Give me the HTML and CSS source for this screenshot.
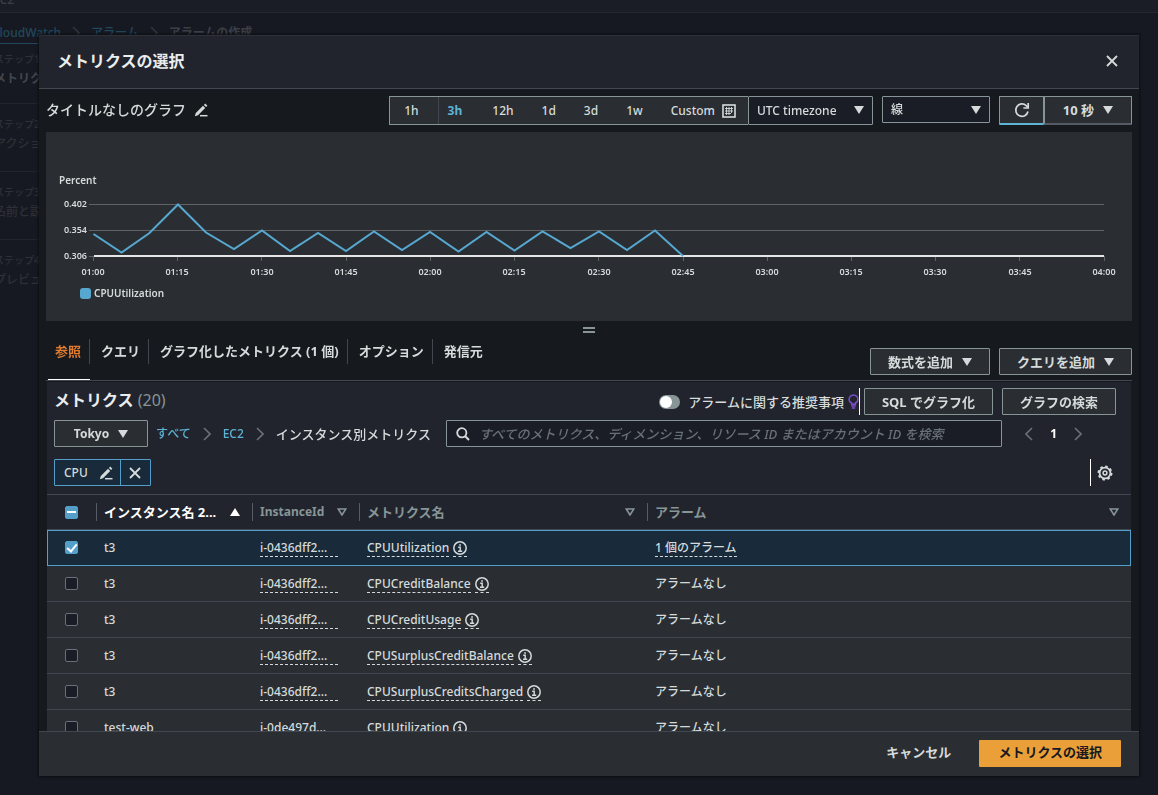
FILE: index.html
```html
<!DOCTYPE html>
<html lang="ja">

<head>
    <meta charset="UTF-8">
    <meta name="viewport" content="width=device-width, initial-scale=1.0">
    <title>メトリクスの選択 | CloudWatch</title>
    <link rel="stylesheet" href="styles.css">
</head>

<body>
<!-- 共通アイコン -->
<svg class="sprite" aria-hidden="true">
    <symbol id="caret" viewBox="0 0 10 8"><path d="M0 0h10L5 8z" fill="currentColor"/></symbol>
    <symbol id="sort" viewBox="0 0 10 8"><path d="M1.2 1h7.6L5 7z" fill="none" stroke="currentColor" stroke-width="1.6"/></symbol>
    <symbol id="chevron" viewBox="0 0 8 14"><path d="M1 1l6 6-6 6" fill="none" stroke="currentColor" stroke-width="1.6"/></symbol>
    <symbol id="cross" viewBox="0 0 14 14"><path d="M2 2l10 10M12 2L2 12" fill="none" stroke="currentColor" stroke-width="1.8"/></symbol>
    <symbol id="pencil" viewBox="0 0 14 14"><path d="M.8 13.200l1-3.200L9 2.800l2.200 2.200L4 12.200zM9.900 1.900l1.300-1.300 2.200 2.200-1.300 1.300z" fill="currentColor"/><path d="M6 12.700h7.500" stroke="currentColor" stroke-width="1.500"/></symbol>
    <symbol id="info" viewBox="0 0 14 14"><circle cx="7" cy="7" r="6.2" fill="none" stroke="currentColor" stroke-width="1.5"/><path d="M5.2 6.2h2v4M5 10.3h4.2" fill="none" stroke="currentColor" stroke-width="1.4"/><path d="M6.2 3.2h1.7v1.6H6.2z" fill="currentColor"/></symbol>
</svg>

<div class="page">
    <div class="page-top">EC2</div>
    <nav class="page-crumbs">
        <a href="#">CloudWatch</a>
        <svg class="chevron"><use href="#chevron"/></svg>
        <a class="plain" href="#">アラーム</a>
        <svg class="chevron"><use href="#chevron"/></svg>
        <strong>アラームの作成</strong>
    </nav>
    <ol class="steps">
        <li class="current"><small>ステップ1</small>メトリクス</li>
        <li><small>ステップ2</small>アクション</li>
        <li><small>ステップ3</small>名前と説明</li>
        <li><small>ステップ4</small>プレビュー</li>
    </ol>
</div>

<div class="overlay">
    <div class="modal" role="dialog" aria-labelledby="modal-title">
        <header class="modal-header">
            <h2 id="modal-title">メトリクスの選択</h2>
            <button class="icon-btn" aria-label="閉じる"><svg class="ico"><use href="#cross"/></svg></button>
        </header>

        <div class="modal-body">
            <div class="graph-bar">
                <h3>タイトルなしのグラフ</h3>
                <button class="icon-btn" aria-label="タイトルを編集"><svg class="ico"><use href="#pencil"/></svg></button>
                <div class="range">
                    <button class="first">1h</button>
                    <button class="active">3h</button>
                    <button>12h</button>
                    <button>1d</button>
                    <button>3d</button>
                    <button>1w</button>
                    <button class="custom">Custom
                        <svg class="ico" viewBox="0 0 14 14"><rect x="1" y="1" width="12" height="12" fill="none" stroke="currentColor" stroke-width="1.6"/><path d="M3 4.5h8M3 7h8M3 9.5h6M4.5 3v8M7 3v8M9.5 3v6" stroke="currentColor" stroke-width=".9"/></svg>
                    </button>
                </div>
                <div class="select timezone">
                    <select aria-label="タイムゾーン"><option>UTC timezone</option></select>
                    <svg class="caret"><use href="#caret"/></svg>
                </div>
                <div class="select kind">
                    <select aria-label="グラフの種類"><option>線</option></select>
                    <svg class="caret"><use href="#caret"/></svg>
                </div>
                <div class="refresh">
                    <button class="btn reload" aria-label="更新">
                        <svg class="ico" viewBox="0 0 16 16"><path d="M14 9.5A6.2 6.2 0 1 1 12.2 3.6L14 5.4" fill="none" stroke="currentColor" stroke-width="1.7"/><path d="M14.2 1v5H9.4" fill="none" stroke="currentColor" stroke-width="1.7"/></svg>
                    </button>
                    <button class="btn interval">10 秒 <svg class="caret"><use href="#caret"/></svg></button>
                </div>
            </div>

            <div class="chart">
                <svg viewBox="0 0 1086 189" role="img" aria-label="CPUUtilization">
                    <text class="unit" x="13" y="52">Percent</text>
                    <g class="y-labels">
                        <text x="41" y="75">0.402</text>
                        <text x="41" y="101">0.354</text>
                        <text x="41" y="127">0.306</text>
                    </g>
                    <path class="grid" d="M43 72.5H1058M43 98.5H1058M43 124.5H48"/>
                    <path class="grid" d="M47.5 124v5M131.5 124v5M215.5 124v5M300.5 124v5M384.5 124v5M468.5 124v5M552.5 124v5M637.5 124v5M721.5 124v5M805.5 124v5M889.5 124v5M973.5 124v5M1058.5 124v5"/>
                    <path class="axis" d="M48 124H1058"/>
                    <polyline class="line" points="47.5,102 75.5,120.5 103.5,101 132,72.5 160,100.5 188,117 216,98.5 244,119 272,101 300,119 328,99.5 356,118 384,100 412.5,119.5 440.5,100 468.5,118.5 496.5,99.5 524.5,116 553,99.5 581,118 609,98.5 637,124"/>
                    <g class="x-labels">
                        <text x="47" y="143">01:00</text>
                        <text x="131" y="143">01:15</text>
                        <text x="216" y="143">01:30</text>
                        <text x="300" y="143">01:45</text>
                        <text x="384" y="143">02:00</text>
                        <text x="468" y="143">02:15</text>
                        <text x="553" y="143">02:30</text>
                        <text x="637" y="143">02:45</text>
                        <text x="721" y="143">03:00</text>
                        <text x="805" y="143">03:15</text>
                        <text x="889" y="143">03:30</text>
                        <text x="974" y="143">03:45</text>
                        <text x="1058" y="143">04:00</text>
                    </g>
                    <rect class="swatch" x="34" y="156" width="11" height="11" rx="3"/>
                    <text class="unit" x="48" y="165">CPUUtilization</text>
                </svg>
            </div>
            <div class="resizer"><span></span></div>

            <div class="tab-bar">
                <div class="tabs" role="tablist">
                    <button role="tab" class="active" aria-selected="true"><span>参照</span></button>
                    <button role="tab"><span>クエリ</span></button>
                    <button role="tab"><span>グラフ化したメトリクス (1 個)</span></button>
                    <button role="tab"><span>オプション</span></button>
                    <button role="tab"><span>発信元</span></button>
                </div>
                <div class="tab-actions">
                    <button class="btn">数式を追加 <svg class="caret"><use href="#caret"/></svg></button>
                    <button class="btn">クエリを追加 <svg class="caret"><use href="#caret"/></svg></button>
                </div>
            </div>

            <section class="metrics">
                <div class="metrics-head">
                    <h3>メトリクス <span>(20)</span></h3>
                    <input class="toggle" type="checkbox" role="switch" id="recommend">
                    <label for="recommend">アラームに関する推奨事項</label>
                    <svg class="bulb" viewBox="0 0 12 16"><path d="M4 11V9.6C2.2 8.8 1.2 7.4 1.2 5.7a4.8 4.8 0 0 1 9.6 0c0 1.7-1 3.1-2.8 3.9V11zM3.5 13h5M4.2 15.2h3.6" fill="none" stroke="currentColor" stroke-width="1.6"/></svg>
                    <i class="bar"></i>
                    <button class="btn sql">SQL でグラフ化</button>
                    <button class="btn find">グラフの検索</button>
                </div>

                <div class="metrics-filter">
                    <button class="btn region">Tokyo <svg class="caret"><use href="#caret"/></svg></button>
                    <nav class="crumbs">
                        <a href="#">すべて</a>
                        <svg class="chevron"><use href="#chevron"/></svg>
                        <a href="#">EC2</a>
                        <svg class="chevron"><use href="#chevron"/></svg>
                        <span>インスタンス別メトリクス</span>
                    </nav>
                    <div class="search">
                        <svg class="ico" viewBox="0 0 14 14"><circle cx="5.8" cy="5.8" r="4.6" fill="none" stroke="currentColor" stroke-width="1.8"/><path d="M9.2 9.2L13 13" stroke="currentColor" stroke-width="2"/></svg>
                        <input type="search" aria-label="検索" placeholder="すべてのメトリクス、ディメンション、リソース ID またはアカウント ID を検索">
                    </div>
                    <div class="pager">
                        <button class="icon-btn" aria-label="前へ"><svg class="chevron flip"><use href="#chevron"/></svg></button>
                        <b>1</b>
                        <button class="icon-btn" aria-label="次へ"><svg class="chevron"><use href="#chevron"/></svg></button>
                    </div>
                </div>

                <div class="metrics-tokens">
                    <div class="token">
                        <button>CPU <svg class="ico"><use href="#pencil"/></svg></button>
                        <button aria-label="削除"><svg class="ico"><use href="#cross"/></svg></button>
                    </div>
                    <i class="bar"></i>
                    <button class="icon-btn" aria-label="設定">
                        <svg class="gear" viewBox="0 0 16 16"><circle cx="8" cy="8" r="5.4" fill="none" stroke="currentColor" stroke-width="1.8"/><circle cx="8" cy="8" r="6.6" fill="none" stroke="currentColor" stroke-width="1.8" stroke-dasharray="2.592 2.592"/><circle cx="8" cy="8" r="1.9" fill="none" stroke="currentColor" stroke-width="1.5"/></svg>
                    </button>
                </div>

                <table>
                    <colgroup>
                        <col class="c-check"><col class="c-name"><col class="c-id"><col class="c-metric"><col>
                    </colgroup>
                    <thead>
                    <tr>
                        <th><input class="check partial" type="checkbox" aria-label="すべて選択"></th>
                        <th class="ja sorted"><div>インスタンス名 2... <svg class="caret up"><use href="#caret"/></svg></div></th>
                        <th><div>InstanceId <svg class="caret"><use href="#sort"/></svg></div></th>
                        <th class="ja"><div>メトリクス名 <svg class="caret"><use href="#sort"/></svg></div></th>
                        <th class="ja"><div>アラーム <svg class="caret"><use href="#sort"/></svg></div></th>
                    </tr>
                    </thead>
                    <tbody>
                    <tr class="selected">
                        <td><input class="check" type="checkbox" aria-label="t3 CPUUtilization" checked></td>
                        <td>t3</td>
                        <td><span class="dash id">i-0436dff2...</span></td>
                        <td><span class="dash">CPUUtilization</span> <span class="dash"><svg class="ico"><use href="#info"/></svg></span></td>
                        <td><span class="dash">1 個のアラーム</span></td>
                    </tr>
                    <tr>
                        <td><input class="check" type="checkbox" aria-label="t3 CPUCreditBalance"></td>
                        <td>t3</td>
                        <td><span class="dash id">i-0436dff2...</span></td>
                        <td><span class="dash">CPUCreditBalance</span> <span class="dash"><svg class="ico"><use href="#info"/></svg></span></td>
                        <td>アラームなし</td>
                    </tr>
                    <tr>
                        <td><input class="check" type="checkbox" aria-label="t3 CPUCreditUsage"></td>
                        <td>t3</td>
                        <td><span class="dash id">i-0436dff2...</span></td>
                        <td><span class="dash">CPUCreditUsage</span> <span class="dash"><svg class="ico"><use href="#info"/></svg></span></td>
                        <td>アラームなし</td>
                    </tr>
                    <tr>
                        <td><input class="check" type="checkbox" aria-label="t3 CPUSurplusCreditBalance"></td>
                        <td>t3</td>
                        <td><span class="dash id">i-0436dff2...</span></td>
                        <td><span class="dash">CPUSurplusCreditBalance</span> <span class="dash"><svg class="ico"><use href="#info"/></svg></span></td>
                        <td>アラームなし</td>
                    </tr>
                    <tr>
                        <td><input class="check" type="checkbox" aria-label="t3 CPUSurplusCreditsCharged"></td>
                        <td>t3</td>
                        <td><span class="dash id">i-0436dff2...</span></td>
                        <td><span class="dash">CPUSurplusCreditsCharged</span> <span class="dash"><svg class="ico"><use href="#info"/></svg></span></td>
                        <td>アラームなし</td>
                    </tr>
                    <tr>
                        <td><input class="check" type="checkbox" aria-label="test-web CPUUtilization"></td>
                        <td>test-web</td>
                        <td><span class="dash id">i-0de497d...</span></td>
                        <td><span class="dash">CPUUtilization</span> <span class="dash"><svg class="ico"><use href="#info"/></svg></span></td>
                        <td>アラームなし</td>
                    </tr>
                    </tbody>
                </table>
            </section>
        </div>

        <footer class="modal-footer">
            <button class="link-btn">キャンセル</button>
            <button class="primary">メトリクスの選択</button>
        </footer>
    </div>
</div>
</body>

</html>
```

FILE: styles.css
```css
* {
    margin: 0;
    padding: 0;
    box-sizing: border-box;
}

body {
    height: 100vh;
    overflow: hidden;
    background: #161922;
    color: #d5dbdb;
    font: 500 12px/20px "Noto Sans", "Noto Sans CJK JP", sans-serif;
}

button,
input,
select {
    font: inherit;
    color: inherit;
}

button {
    background: none;
    border: 0;
    white-space: nowrap;
    cursor: pointer;
}

a {
    color: #5cb3d4;
    text-decoration: none;
}

ol {
    list-style: none;
}

/* アイコン */
.sprite {
    display: none;
}

.ico {
    width: 14px;
    height: 14px;
    flex: none;
}

.caret {
    width: 10px;
    height: 8px;
    flex: none;
}

.chevron {
    width: 8px;
    height: 14px;
    flex: none;
    color: #687078;
}

.up,
.flip {
    transform: rotate(180deg);
}

.icon-btn {
    display: flex;
    align-items: center;
}

.bar {
    width: 1px;
    height: 27px;
    background: #fff;
}

/* 背面のページ */
.page {
    margin-left: -8px;
    color: #3b3f45;
}

.page-top {
    height: 13px;
    padding-left: 1px;
    line-height: 0;
    background: #1a1d26;
    border-bottom: 1px solid #23272f;
}

.page-crumbs {
    display: flex;
    align-items: center;
    gap: 11px;
    height: 40px;
}

.page-crumbs a {
    color: #21485a;
    border-bottom: 1px solid #21485a;
}

.page-crumbs .plain {
    border: 0;
}

.page-crumbs .chevron {
    color: #30343a;
}

.steps {
    margin-top: -4px;
}

.steps li {
    width: 220px;
    height: 68px;
    padding-left: 2px;
    color: #2d3137;
    border-bottom: 1px solid #20242b;
}

.steps li + li {
    padding-top: 10px;
}

.steps li:last-child {
    border: 0;
}

.steps .current {
    height: 55px;
    color: #43474d;
    font-weight: 700;
}

.steps small {
    display: block;
    color: #2d3137;
    font-size: 10px;
    font-weight: 500;
}

/* モーダル */
.overlay {
    position: fixed;
    inset: 0;
    display: flex;
    padding: 35px 19px 19px 39px;
}

.modal {
    display: flex;
    flex-direction: column;
    flex: 1;
    min-width: 0;
    background: #16191d;
    box-shadow: 0 0 2px 1px #0c0e11;
}

.modal-header {
    display: flex;
    align-items: center;
    justify-content: space-between;
    height: 54px;
    padding: 0 20px 2px 18px;
    flex: none;
    background: #21242c;
    border-top: 1px solid #2e3238;
    border-bottom: 1px solid #414750;
}

.modal-header h2 {
    color: #eaeded;
    font-size: 16px;
    font-weight: 700;
}

.modal-body {
    display: flex;
    flex-direction: column;
    flex: 1;
    min-height: 0;
    padding: 0 7px;
    overflow: hidden;
}

.modal-body > * {
    flex: none;
}

.modal-footer {
    display: flex;
    align-items: center;
    justify-content: flex-end;
    gap: 28px;
    height: 45px;
    padding: 0 18px 2px;
    flex: none;
    background: #2a2e33;
    border-top: 1px solid #414750;
    font-size: 13px;
    font-weight: 700;
}

.modal-footer button {
    height: 27px;
    padding-bottom: 3px;
}

.modal-footer .primary {
    padding: 0 19px 3px;
    background: #eb9f38;
    border-radius: 1px;
    color: #16191f;
}

/* ボタンとセレクト */
.btn {
    display: flex;
    align-items: center;
    justify-content: center;
    gap: 9px;
    height: 27px;
    padding: 0 17px;
    background: #2a2e33;
    border: 1px solid #879596;
    border-radius: 1px;
    font-size: 13px;
    font-weight: 700;
}

.select {
    position: relative;
}

.select select {
    width: 100%;
    height: 100%;
    padding: 0 8px;
    appearance: none;
    background: #1a1d26;
    border: 1px solid #879596;
    border-radius: 1px;
}

.select .caret {
    position: absolute;
    top: 10px;
    right: 9px;
    pointer-events: none;
}

/* グラフ上部 */
.graph-bar {
    display: flex;
    align-items: flex-start;
    height: 43px;
    padding-top: 7px;
}

.graph-bar h3 {
    margin-right: 8px;
    font-size: 14px;
    font-weight: 500;
    line-height: 28px;
}

.graph-bar > .icon-btn {
    height: 28px;
    margin-right: auto;
}

.range {
    display: flex;
    height: 29px;
    background: #2a2e33;
    border: 1px solid #879596;
    border-right: 0;
}

.range button {
    display: flex;
    align-items: center;
    gap: 7px;
    padding: 0 14px;
}

.range .first {
    padding-right: 19px;
}

.range .active {
    padding: 0 16px 0 9px;
    border-left: 1px solid #414750;
    color: #5cb3d4;
    font-weight: 700;
}

.range .custom {
    padding-right: 12px;
}

.timezone {
    width: 125px;
    height: 29px;
}

.kind {
    width: 108px;
    height: 27px;
    margin: 0 9px;
}

.refresh {
    display: flex;
}

.refresh .btn {
    height: 29px;
    border-bottom: 2px solid #545b64;
}

.refresh .reload {
    width: 45px;
    padding: 0;
    border-bottom-color: #5cb3d4;
}

.refresh .reload .ico {
    width: 16px;
    height: 16px;
}

.refresh .interval {
    width: 88px;
}

/* グラフ */
.chart {
    background: #2a2e33;
}

.chart svg {
    display: block;
    width: 100%;
    height: auto;
}

.chart text {
    fill: #d5dbdb;
    font-size: 9px;
    font-weight: 600;
}

.chart .unit {
    font-size: 10px;
}

.y-labels {
    text-anchor: end;
}

.x-labels {
    text-anchor: middle;
}

.grid {
    fill: none;
    stroke: #606264;
}

.axis {
    stroke: #e6e6e6;
    stroke-width: 2;
}

.line {
    fill: none;
    stroke: #57a8d0;
    stroke-width: 2;
}

.swatch {
    fill: #57a8d0;
}

.resizer {
    display: flex;
    align-items: center;
    justify-content: center;
    height: 17px;
}

.resizer span {
    width: 12px;
    height: 6px;
    border: solid #879596;
    border-width: 2px 0;
}

/* タブ */
.tab-bar {
    display: flex;
    justify-content: space-between;
    height: 43px;
    border-bottom: 1px solid #414750;
}

.tabs {
    display: flex;
    padding-left: 2px;
}

.tabs button {
    height: 42px;
    padding-bottom: 15px;
    font-size: 13px;
    font-weight: 700;
}

.tabs span {
    display: block;
    padding: 2px 8px 3px 11px;
    border-right: 1px solid #414750;
}

.tabs .active {
    border-bottom: 1px solid #fff;
    padding-bottom: 14px;
    color: #e07b30;
}

.tabs .active span {
    padding-left: 7px;
}

.tabs button:last-child span {
    border: 0;
}

.tab-actions {
    display: flex;
    gap: 9px;
    padding-top: 10px;
}

/* メトリクス一覧 */
.metrics {
    margin: 1px 1px 0;
    background: #21242c;
}

.metrics-head,
.metrics-filter,
.metrics-tokens {
    display: flex;
    align-items: center;
    padding: 6px 15px 0 7px;
}

.metrics-head h3 {
    align-self: flex-start;
    margin-right: auto;
    color: #eaeded;
    font-size: 16px;
    font-weight: 700;
    line-height: 24px;
}

.metrics-head h3 span {
    color: #879596;
    font-weight: 400;
}

.metrics-head label {
    margin: 0 4px 0 8px;
    font-size: 13px;
}

.toggle {
    width: 21px;
    height: 14px;
    padding: 1px;
    appearance: none;
    background: #879596;
    border-radius: 7px;
}

.toggle::after {
    content: "";
    display: block;
    width: 12px;
    height: 12px;
    border-radius: 50%;
    background: #fff;
}

.bulb {
    width: 11px;
    height: 15px;
    color: #7d4fd0;
}

.sql {
    margin: 0 9px 0 4px;
}

.metrics-filter {
    padding-top: 5px;
}

.region {
    width: 94px;
    font-size: 12px;
}

.crumbs {
    display: flex;
    align-items: center;
    gap: 12px;
    margin: 0 15px 0 8px;
    font-size: 13px;
    white-space: nowrap;
}

.crumbs a {
    font-size: 12px;
}

.search {
    display: flex;
    align-items: center;
    flex: 1;
    gap: 9px;
    height: 27px;
    padding: 0 9px;
    background: #1a1d26;
    border: 1px solid #879596;
    border-radius: 1px;
}

.search input {
    flex: 1;
    min-width: 0;
    background: none;
    border: 0;
    outline: 0;
    font-size: 13px;
}

.search input::placeholder {
    color: #687078;
    font-style: italic;
}

.pager {
    display: flex;
    align-items: center;
    gap: 17px;
    margin: 0 34px 0 23px;
    color: #fff;
}

.pager .icon-btn {
    width: 8px;
}

.metrics-tokens {
    gap: 6px;
    padding: 12px 18px 8px 7px;
}

.token {
    display: flex;
    height: 27px;
    margin-right: auto;
    background: #192a3a;
    border: 1px solid #539fc9;
    border-radius: 1px;
}

.token button {
    display: flex;
    align-items: center;
    gap: 11px;
    padding: 0 7px 0 9px;
}

.token button + button {
    padding: 0 8px 0 7px;
    border-left: 1px solid #539fc9;
}

.gear {
    width: 16px;
    height: 16px;
}

/* テーブル */
table {
    width: 100%;
    table-layout: fixed;
    border-collapse: separate;
    border-spacing: 0;
    border-top: 1px solid #414750;
}

.c-check {
    width: 49px;
}

.c-name {
    width: 156px;
}

.c-id {
    width: 107px;
}

.c-metric {
    width: 288px;
}

th {
    height: 35px;
    padding: 0;
    border-bottom: 1px solid #414750;
    color: #879596;
    font-weight: 700;
    text-align: left;
}

th div {
    display: flex;
    align-items: center;
    justify-content: space-between;
    height: 18px;
    padding: 0 12px 0 7px;
    border-left: 1px solid #545b64;
    white-space: nowrap;
}

.ja {
    font-size: 13px;
}

.sorted {
    color: #fff;
}

td {
    height: 36px;
    padding: 0 8px;
    background: #2a2e33;
    border-bottom: 1px solid #414750;
    white-space: nowrap;
}

th:first-child,
td:first-child {
    padding-left: 18px;
}

.selected {
    outline: 1px solid #539fc9;
    outline-offset: -1px;
}

.selected td {
    background: #192a3a;
    border-color: #539fc9;
}

.dash {
    display: inline-block;
    height: 18px;
    border-bottom: 1px dashed #d5dbdb;
    line-height: 18px;
    vertical-align: middle;
}

.dash + .dash {
    margin-left: 1px;
}

.dash .ico {
    display: block;
    margin-top: 2px;
}

.id {
    width: 78px;
}

.check {
    display: block;
    width: 13px;
    height: 13px;
    appearance: none;
    background: #1a1d26;
    border: 1px solid #687078;
    border-radius: 2px;
}

.check:checked,
.partial {
    background: #539fc9;
    border-color: #539fc9;
}

.check:checked::after {
    content: "";
    display: block;
    width: 4px;
    height: 8px;
    margin: 0 auto;
    border: solid #fff;
    border-width: 0 2px 2px 0;
    transform: rotate(40deg);
}

.partial::after {
    content: "";
    display: block;
    width: 9px;
    height: 2px;
    margin: 4px auto;
    background: #fff;
}
```
